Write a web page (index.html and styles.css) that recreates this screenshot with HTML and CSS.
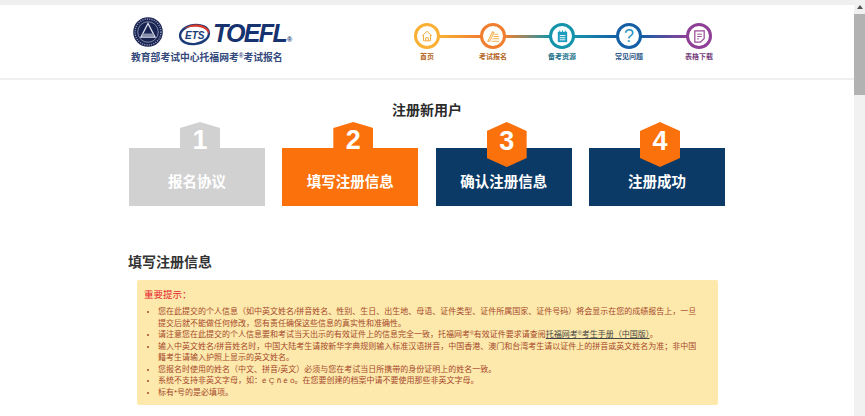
FILE: index.html
```html
<!DOCTYPE html>
<html lang="zh-CN">
<head>
<meta charset="utf-8">
<title>注册新用户</title>
<link rel="stylesheet" href="styles.css">
</head>
<body>
<div class="page">
  <header class="header">
    <div class="header-inner">
      <div class="brand">
        <div class="logos">
          <svg class="emblem" viewBox="0 0 30 30" width="30" height="30" aria-hidden="true">
            <circle cx="15" cy="15" r="14.8" fill="#1a2452"/>
            <circle cx="15" cy="15" r="13" fill="none" stroke="#aab0cc" stroke-width="1.300" stroke-dasharray="1 1.300"/>
            <circle cx="15" cy="15" r="10.300" fill="none" stroke="#c5c9dc" stroke-width=".6"/>
            <path d="M15 6.500 8 20h14z" fill="none" stroke="#dfe2ee" stroke-width="1.300"/>
            <path d="M9.500 16.500h11v3.300h-11z" fill="#8a90ad"/>
          </svg>
          <svg class="ets" viewBox="0 0 34 24" width="34" height="24" aria-hidden="true">
            <ellipse cx="16.500" cy="12.500" rx="14.500" ry="9.500" fill="#fff" stroke="#1b3a78" stroke-width="2.400" transform="rotate(-8 16.500 12.500)"/>
            <path d="M6 7C10 2.500 23 0 29.500 6.500 31 8 31.500 10 31 12.500 29.500 8 25 5 18 4.800 13 4.600 9 5.500 6 7z" fill="#d8392b"/>
            <text class="ets-text" x="7" y="17">ETS</text>
          </svg>
          <span class="toefl">TOEFL<span class="reg">®</span></span>
        </div>
        <div class="brand-name">教育部考试中心托福网考<sup class="sup">®</sup>考试报名</div>
      </div>
      <nav class="nav">
        <div class="track">
          <span class="node n1"><svg viewBox="0 0 16 16" width="14" height="14" aria-hidden="true"><path d="M2.500 8 8 2.500 13.500 8M4 7v6.500h8V7M6.500 13.500V10h3v3.500" fill="none" stroke="#f5a93a" stroke-width="1.100"/></svg></span>
          <span class="link l1"></span>
          <span class="node n2"><svg viewBox="0 0 16 16" width="15" height="15" aria-hidden="true"><path d="M2 13 7 3l1.500 1L4 13zM8 8h6M7 10.500h7M6 13h8M9 5.500h4" fill="none" stroke="#f6b04e" stroke-width="1.100"/></svg></span>
          <span class="link l2"></span>
          <span class="node n3"><svg viewBox="0 0 16 16" width="15" height="15" aria-hidden="true"><path d="M3 3h10v11H3z" fill="#1e9cc0"/><path d="M5 1.500v3M8 1.500v3M11 1.500v3" stroke="#1e9cc0"/><path d="M5 7h6M5 9.300h6M5 11.500h6" stroke="#fff" stroke-width="1"/></svg></span>
          <span class="link l3"></span>
          <span class="node n4"><span class="q">?</span></span>
          <span class="link l4"></span>
          <span class="node n5"><svg viewBox="0 0 16 16" width="15" height="15" aria-hidden="true"><path d="M3 2h10v8l-4 4H3z" fill="none" stroke="#9a4a97" stroke-width="1.300"/><path d="M5.500 5.500h5M5.500 8h5M5.500 10.500h2" stroke="#9a4a97"/></svg></span>
        </div>
        <div class="nav-labels">
          <span class="nl c1">首页</span>
          <span class="nl c2">考试报名</span>
          <span class="nl c3">备考资源</span>
          <span class="nl c4">常见问题</span>
          <span class="nl c5">表格下载</span>
        </div>
      </nav>
    </div>
  </header>

  <main class="main">
    <h1 class="title">注册新用户</h1>
    <ol class="steps">
      <li class="step done"><span class="badge house">1</span><div class="box">报名协议</div></li>
      <li class="step current"><span class="badge house">2</span><div class="box">填写注册信息</div></li>
      <li class="step todo"><span class="badge hex">3</span><div class="box">确认注册信息</div></li>
      <li class="step todo"><span class="badge hex">4</span><div class="box">注册成功</div></li>
    </ol>
    <h2 class="section">填写注册信息</h2>
    <section class="notice">
      <p class="notice-head">重要提示：</p>
      <ul class="notice-list">
        <li>您在此提交的个人信息（如中英文姓名/拼音姓名、性别、生日、出生地、母语、证件类型、证件所属国家、证件号码）将会显示在您的成绩报告上，一旦提交后就不能做任何修改，您有责任确保这些信息的真实性和准确性。</li>
        <li>请注意您在此提交的个人信息要和考试当天出示的有效证件上的信息完全一致，托福网考<sup class="sup">®</sup>有效证件要求请查阅<a class="doc">托福网考<sup class="sup">®</sup>考生手册（中国版）</a>。</li>
        <li>输入中英文姓名/拼音姓名时，中国大陆考生请按新华字典规则输入标准汉语拼音，中国香港、澳门和台湾考生请以证件上的拼音或英文姓名为准；非中国籍考生请输入护照上显示的英文姓名。</li>
        <li>您报名时使用的姓名（中文、拼音/英文）必须与您在考试当日所携带的身份证明上的姓名一致。</li>
        <li>系统不支持非英文字母，如：é Ç ñ è ò。在您要创建的档案中请不要使用那些非英文字母。</li>
        <li>标有*号的是必填项。</li>
      </ul>
    </section>
  </main>

  <div class="scrollbar" aria-hidden="true">
    <span class="arrow"></span>
    <span class="thumb"></span>
  </div>
</div>
</body>
</html>
```

FILE: styles.css
```css
* { box-sizing: border-box; }
html, body { margin: 0; padding: 0; height: 416px; overflow: hidden; background: #fff; }
body { font-family: "Liberation Sans", "Noto Sans CJK SC", sans-serif; color: #222; }

.page { position: relative; width: 865px; height: 416px; padding-right: 11px; overflow: hidden; }

.header { border-top: 5px solid #efefef; border-bottom: 2px solid #efefef; height: 80px; background: #fff; }
.header-inner { display: flex; width: 600px; margin-left: 130px; padding-top: 11px; }

.brand { width: 270px; flex: none; padding-left: 1px; }
.logos { display: flex; align-items: center; height: 31px; padding-left: 2px; }
.emblem { flex: none; }
.ets { flex: none; margin-left: 15px; margin-top: 4px; }
.ets-text { font: italic 700 10px "Liberation Sans", sans-serif; fill: #1b3a78; }
.toefl { font: italic 700 25px/1 "Liberation Sans", sans-serif; color: #17336f; margin-left: 1px; margin-top: 3px; letter-spacing: -1.700px; }
.reg { font-size: 7px; font-style: normal; letter-spacing: 0; margin-left: 1px; }
.brand-name { margin-top: 5px; font-size: 9.800px; line-height: 12px; font-weight: 700; color: #344a7d; white-space: nowrap; }
.sup { font-size: .65em; line-height: 0; vertical-align: .45em; }

.nav { width: 320px; margin-left: 14px; flex: none; }
.track { display: flex; align-items: center; height: 28px; margin-top: 6px; }
.node { flex: none; display: flex; align-items: center; justify-content: center; width: 26px; height: 26px; border-radius: 50%; border: 3px solid; background: #fff; z-index: 1; }
.link { flex: none; height: 3px; margin: 0 -1px; }
.n1 { border-color: #f9b035; }
.n2 { border-color: #f17e2e; }
.n3 { border-color: #1494ab; }
.n4 { border-color: #145fa6; }
.n5 { border-color: #8f3f96; }
.l1 { width: 42px; background: linear-gradient(90deg, #f9b035, #f17e2e); }
.l2 { width: 45px; background: linear-gradient(90deg, #f17e2e, #1494ab); }
.l3 { width: 43px; background: linear-gradient(90deg, #1494ab, #145fa6); }
.l4 { width: 46px; background: linear-gradient(90deg, #145fa6, #8f3f96); }
.q { font-size: 18px; line-height: 1; color: #2a93c4; font-weight: 400; }

.nav-labels { display: flex; margin-top: 2px; margin-left: -4px; }
.nl { flex: none; width: 34px; text-align: center; font-size: 7px; line-height: 10px; font-weight: 700; white-space: nowrap; }
.c1 { color: #b5651d; }
.c2 { color: #b5651d; margin-left: 32px; }
.c3 { color: #20708a; margin-left: 35px; }
.c4 { color: #2a5587; margin-left: 33px; }
.c5 { color: #75407c; margin-left: 36px; }

.main { width: 598px; margin-left: 128px; }
.title { margin: 22px 0 0; text-align: center; font-size: 14px; line-height: 16px; font-weight: 700; color: #2b2b2b; }

.steps { display: flex; gap: 17.330px; list-style: none; margin: 4px 0 0; padding: 0 0 0 1px; }
.step { position: relative; width: 136px; padding-top: 26px; }
.box { display: flex; align-items: center; justify-content: center; height: 58px; padding-top: 7px; font-size: 14.500px; font-weight: 700; color: #fff; }
.badge { position: absolute; top: 0; left: 51px; width: 40px; display: flex; align-items: center; justify-content: center; font-size: 27px; font-weight: 700; color: #fff; }
.house { height: 36px; clip-path: polygon(50% 0, 100% 17%, 100% 100%, 0 100%, 0 17%); }
.hex { height: 45px; padding-bottom: 6px; clip-path: polygon(50% 0, 100% 20%, 100% 80%, 50% 100%, 0 80%, 0 20%); background: #fb710b; }
.done .box, .done .badge { background: #d1d1d1; }
.current .box, .current .badge { background: #fb710b; }
.todo .box { background: #0b3a67; }

.section { margin: 47px 0 0; font-size: 14px; line-height: 18px; font-weight: 700; color: #333; }

.notice { width: 581px; height: 125px; margin: 9px 0 0 9px; padding: 9px 18px 0 7px; background: #fde9ac; border-radius: 2px; }
.notice-head { margin: 0; font-size: 9.500px; line-height: 12px; color: #e4202b; }
.notice-list { margin: 5px 0 0; padding: 0 0 0 14px; font-size: 8px; line-height: 11.500px; color: #a5482a; }
.doc { color: #444; text-decoration: underline; }

.scrollbar { position: absolute; top: 0; right: 0; width: 11px; height: 416px; background: #f1f1f1; display: flex; flex-direction: column; align-items: center; }
.arrow { flex: none; width: 0; height: 0; margin-top: 5px; border-left: 3px solid transparent; border-right: 3px solid transparent; border-bottom: 4px solid #505050; }
.thumb { flex: none; width: 100%; height: 81px; margin-top: 5px; background: #b2b2b2; }
```
